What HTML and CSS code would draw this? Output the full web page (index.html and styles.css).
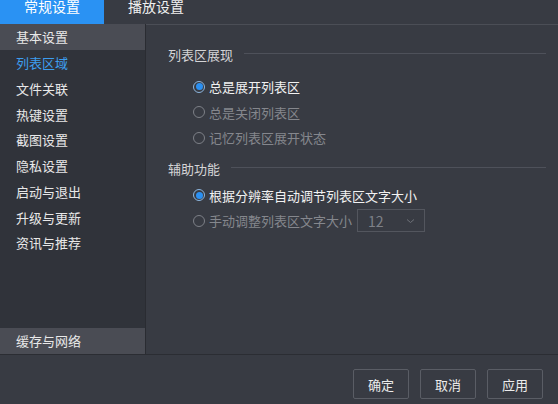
FILE: index.html
```html
<!DOCTYPE html>
<html lang="zh-CN">
<head>
<meta charset="utf-8">
<title>设置</title>
<link rel="stylesheet" href="styles.css">
</head>
<body>
<div class="app">
  <div class="tabs">
    <div class="tab tab-active">常规设置</div>
    <div class="tab">播放设置</div>
  </div>
  <div class="main">
    <nav class="sidebar">
      <div class="nav-item nav-selected">基本设置</div>
      <div class="nav-item nav-current">列表区域</div>
      <div class="nav-item">文件关联</div>
      <div class="nav-item">热键设置</div>
      <div class="nav-item">截图设置</div>
      <div class="nav-item">隐私设置</div>
      <div class="nav-item">启动与退出</div>
      <div class="nav-item">升级与更新</div>
      <div class="nav-item">资讯与推荐</div>
      <div class="nav-item nav-bottom">缓存与网络</div>
    </nav>
    <section class="content">
      <div class="group-title"><span>列表区展现</span><i class="rule"></i></div>
      <div class="options options-first">
        <div class="option"><span class="radio checked"></span><span class="label on">总是展开列表区</span></div>
        <div class="option"><span class="radio"></span><span class="label">总是关闭列表区</span></div>
        <div class="option"><span class="radio"></span><span class="label">记忆列表区展开状态</span></div>
      </div>
      <div class="group-title group-second"><span>辅助功能</span><i class="rule"></i></div>
      <div class="options options-second">
        <div class="option"><span class="radio checked"></span><span class="label on">根据分辨率自动调节列表区文字大小</span></div>
        <div class="option"><span class="radio"></span><span class="label">手动调整列表区文字大小</span>
          <div class="select"><span>12</span>
            <svg class="chev" width="9" height="6" viewBox="0 0 9 6"><path d="M1 1.5 L4.5 4.5 L8 1.5" fill="none" stroke="#6e7178" stroke-width="1"/></svg>
          </div>
        </div>
      </div>
    </section>
  </div>
  <div class="footer">
    <button class="btn">确定</button>
    <button class="btn">取消</button>
    <button class="btn">应用</button>
  </div>
</div>
</body>
</html>
```

FILE: styles.css
```css
* { box-sizing: border-box; }
html, body { margin: 0; padding: 0; }
body {
  background: #383b43;
  font-family: "Noto Sans CJK SC", "Noto Sans", sans-serif;
  font-size: 13px;
  color: #e6e6e6;
}
.app {
  width: 558px;
  height: 404px;
  display: flex;
  flex-direction: column;
  background: #383b43;
}
.tabs {
  height: 24px;
  display: flex;
  background: #383b43;
  overflow: hidden;
}
.tab {
  width: 104px;
  height: 24px;
  line-height: 13px;
  font-size: 14px;
  color: #f0f0f0;
  text-align: center;
}
.tab-active {
  background: #2a92f3;
  color: #ffffff;
}
.main {
  flex: 1;
  display: flex;
  min-height: 0;
}
.sidebar {
  width: 146px;
  background: #30333a;
  border-right: 1px solid #2a2c32;
  display: flex;
  flex-direction: column;
}
.nav-item {
  height: 25.75px;
  line-height: 25px;
  padding-left: 16px;
  color: #e8e8e8;
}
.nav-selected { background: #4a4c54; height: 26px; }
.nav-current { color: #3d9ef0; }
.nav-bottom {
  margin-top: auto;
  background: #4a4c54;
  height: 26px;
}
.content {
  flex: 1;
  border-top: 1px solid #4b4e56;
  padding: 21px 12px 0 22px;
}
.group-title {
  display: flex;
  align-items: center;
  height: 18px;
  line-height: 18px;
  color: #d4d4d6;
}
.rule {
  flex: 1;
  height: 1px;
  background: #4e515a;
  margin-left: 11px;
  margin-top: -3px;
}
.options { padding-left: 25px; }
.options-first { margin-top: 10px; }
.options-second { margin-top: 5px; }
.group-second { margin-top: 9px; }
.option {
  height: 25.5px;
  display: flex;
  align-items: center;
}
.radio {
  width: 12px;
  height: 12px;
  border-radius: 50%;
  border: 1px solid #7d8087;
  margin-right: 4px;
  flex: none;
  position: relative;
}
.radio.checked {
  border-color: #8db6de;
  background: #383b43;
}
.radio.checked::after {
  content: "";
  position: absolute;
  left: 1.5px;
  top: 1.5px;
  width: 7px;
  height: 7px;
  border-radius: 50%;
  background: #2b90f2;
}
.label { color: #85878d; white-space: nowrap; }
.label.on { color: #f2f2f2; }
.select {
  width: 68px;
  height: 23px;
  border: 1px solid #53565e;
  margin-left: 5px;
  display: flex;
  align-items: center;
  justify-content: space-between;
  padding: 0 9px 0 10px;
  color: #7e8188;
  font-size: 14px;
}
.chev { display: block; }
.footer {
  height: 50px;
  border-top: 1px solid #2b2d33;
  display: flex;
  justify-content: flex-end;
  align-items: flex-start;
  gap: 11px;
  padding: 14px 15px 0 0;
}
.btn {
  width: 56px;
  height: 30px;
  background: #383b43;
  border: 1px solid #5a5d65;
  border-radius: 2px;
  color: #ececec;
  font-family: "Noto Sans CJK SC", "Noto Sans", sans-serif;
  font-size: 13px;
  padding: 0;
}
```
